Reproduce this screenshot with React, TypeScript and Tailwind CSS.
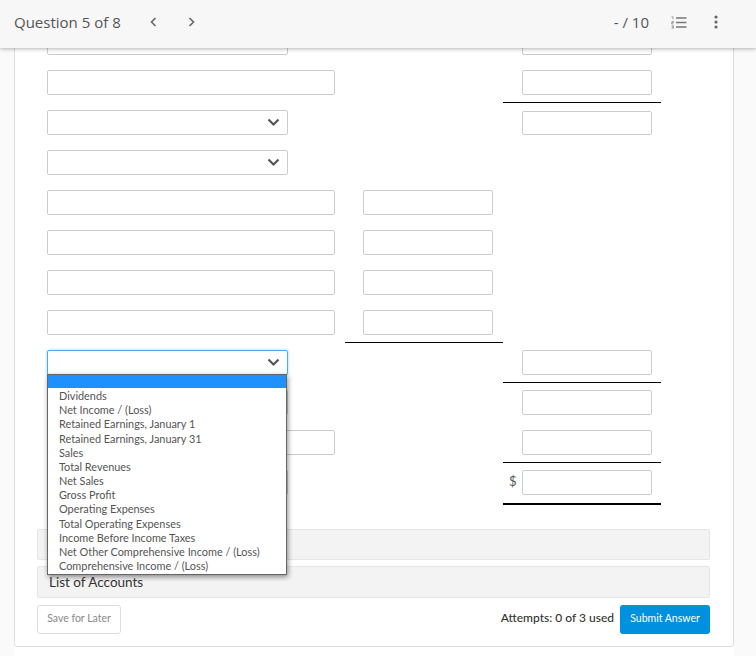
const Input = ({ w = "w-[130px]", h = "h-[25px]" }: { w?: string; h?: string }) => (
  <div className={`${w} ${h} border border-[#cccccc] rounded-[2px] bg-white shrink-0`} />
);

const Select = ({ focused = false }: { focused?: boolean }) => (
  <div
    className={`w-[241px] h-[25px] border rounded-[2px] bg-white flex items-center justify-end pr-[7px] ${
      focused ? "border-[#53a8ea] shadow-[0_0_3px_#9ccdf2]" : "border-[#cccccc]"
    }`}
  >
    <svg width="13" height="9" viewBox="0 0 13 9" fill="none">
      <path d="M1.5 1.5 L6.5 6.5 L11.5 1.5" stroke="#555555" strokeWidth="2.2" />
    </svg>
  </div>
);

const options = [
  "Dividends",
  "Net Income / (Loss)",
  "Retained Earnings, January 1",
  "Retained Earnings, January 31",
  "Sales",
  "Total Revenues",
  "Net Sales",
  "Gross Profit",
  "Operating Expenses",
  "Total Operating Expenses",
  "Income Before Income Taxes",
  "Net Other Comprehensive Income / (Loss)",
  "Comprehensive Income / (Loss)",
];

const Dropdown = () => (
  <div className="absolute left-0 top-[31px] z-20 w-[240px] h-[201px] bg-white border border-[#666666] shadow-[1px_2px_5px_rgba(0,0,0,0.45)]">
    <div className="h-[13px] bg-[#1e90ff]" />
    <ul className="m-0 p-0 pt-[1px] list-none">
      {options.map((o) => (
        <li key={o} className="pl-[11px] text-[10.9px] leading-[14.17px] text-[#555555] whitespace-nowrap">
          {o}
        </li>
      ))}
    </ul>
  </div>
);

type Row = {
  c1: "wide" | "select" | "focused";
  c2?: boolean;
  c2Line?: boolean;
  c3?: boolean;
  c3Line?: boolean;
  c3Short?: boolean;
  total?: boolean;
};

const rows: Row[] = [
  { c1: "select", c3: true },
  { c1: "wide", c3: true, c3Line: true },
  { c1: "select", c3: true, c3Short: true },
  { c1: "select" },
  { c1: "wide", c2: true },
  { c1: "wide", c2: true },
  { c1: "wide", c2: true },
  { c1: "wide", c2: true, c2Line: true },
  { c1: "focused", c3: true, c3Line: true },
  { c1: "select", c3: true },
  { c1: "wide", c3: true, c3Line: true },
  { c1: "select", c3: true, total: true },
];

const ListIcon = () => (
  <svg width="16" height="13" viewBox="0 0 16 13" fill="none">
    <path d="M5 2 H15.5 M5 6.5 H15.5 M5 11 H15.5" stroke="#777777" strokeWidth="1.5" />
    <path d="M0.5 0.8 H2 V3.2 M0.5 5.5 H2.4 V6.6 H0.6 V7.9 H2.5 M0.5 9.8 H2.4 V12.2 H0.5 M1 11 H2.4" stroke="#8a8a8a" strokeWidth="0.8" />
  </svg>
);

export default function App() {
  return (
    <div className="w-[756px] h-[656px] overflow-hidden bg-[#fafafa] font-['Lato',sans-serif]">
      <header className="relative z-30 h-12 bg-[#f7f7f7] shadow-[0_1px_4px_rgba(0,0,0,0.3)] flex items-center pl-[14px] pr-[38px] pb-[4px]">
        <span className="font-['Open_Sans',sans-serif] text-[15px] text-[#555555]">Question 5 of 8</span>
        <svg className="ml-[29px]" width="7" height="10" viewBox="0 0 7 10" fill="none">
          <path d="M5.5 1 L1.5 5 L5.5 9" stroke="#666666" strokeWidth="1.6" />
        </svg>
        <svg className="ml-[31px]" width="7" height="10" viewBox="0 0 7 10" fill="none">
          <path d="M1.5 1 L5.5 5 L1.5 9" stroke="#666666" strokeWidth="1.6" />
        </svg>
        <span className="ml-auto font-['Open_Sans',sans-serif] text-[15px] text-[#555555]">- / 10</span>
        <span className="ml-[22px] flex"><ListIcon /></span>
        <svg className="ml-[27px]" width="4" height="14" viewBox="0 0 4 14" fill="#666666">
          <circle cx="2" cy="2" r="1.6" />
          <circle cx="2" cy="7" r="1.6" />
          <circle cx="2" cy="12" r="1.6" />
        </svg>
      </header>

      <div className="ml-[14px] -mt-[26px] w-[720px] h-[634px] bg-white">
        <main className="h-[625px] bg-white border border-[#dddddd] rounded-[3px] pl-[22px] pr-[23px]">
          <div className="ml-[10px]">
            {rows.map((r, i) => (
              <div
                key={i}
                className={`grid grid-cols-[298px_158px_158px] ${r.total ? "h-[42px]" : "h-10"}`}
              >
                <div className="relative pt-[7px]">
                  {r.c1 === "wide" ? <Input w="w-[288px]" /> : <Select focused={r.c1 === "focused"} />}
                  {r.c1 === "focused" && <Dropdown />}
                </div>
                <div className={`pt-[7px] pl-[18px] ${r.c2Line ? "border-b border-black" : ""}`}>
                  {r.c2 && <Input />}
                </div>
                <div
                  className={`${r.c3Short ? "pt-[8px]" : "pt-[7px]"} ${
                    r.total ? "pl-[6px] flex border-b-2 border-black" : "pl-[19px]"
                  } ${r.c3Line ? "border-b border-black" : ""}`}
                >
                  {r.total && (
                    <span className="w-[13px] text-[13px] leading-[22px] text-[#555555]">$</span>
                  )}
                  {r.c3 && <Input h={r.c3Short ? "h-[24px]" : "h-[25px]"} />}
                </div>
              </div>
            ))}
          </div>

          <div className="mt-[24px] h-[31px] bg-[#f3f3f3] border border-[#e6e6e6] rounded-[2px]" />
          <div className="mt-[6px] h-[32px] bg-[#f3f3f3] border border-[#e6e6e6] rounded-[2px] pl-[11px] flex items-center text-[13.5px] text-[#333333]">
            List of Accounts
          </div>

          <div className="mt-[7px] flex items-center">
            <button className="w-[84px] h-[29px] pb-[2px] bg-white border border-[#dddddd] rounded-[3px] text-[10.5px] text-[#8a8a8a]">
              Save for Later
            </button>
            <span className="ml-auto pb-[4px] text-[12px] font-medium text-[#333333]">Attempts: 0 of 3 used</span>
            <button className="ml-[6px] w-[90px] h-[29px] pb-[2px] bg-[#0090e0] rounded-[3px] text-[10.5px] text-white">
              Submit Answer
            </button>
          </div>
        </main>
      </div>
    </div>
  );
}
